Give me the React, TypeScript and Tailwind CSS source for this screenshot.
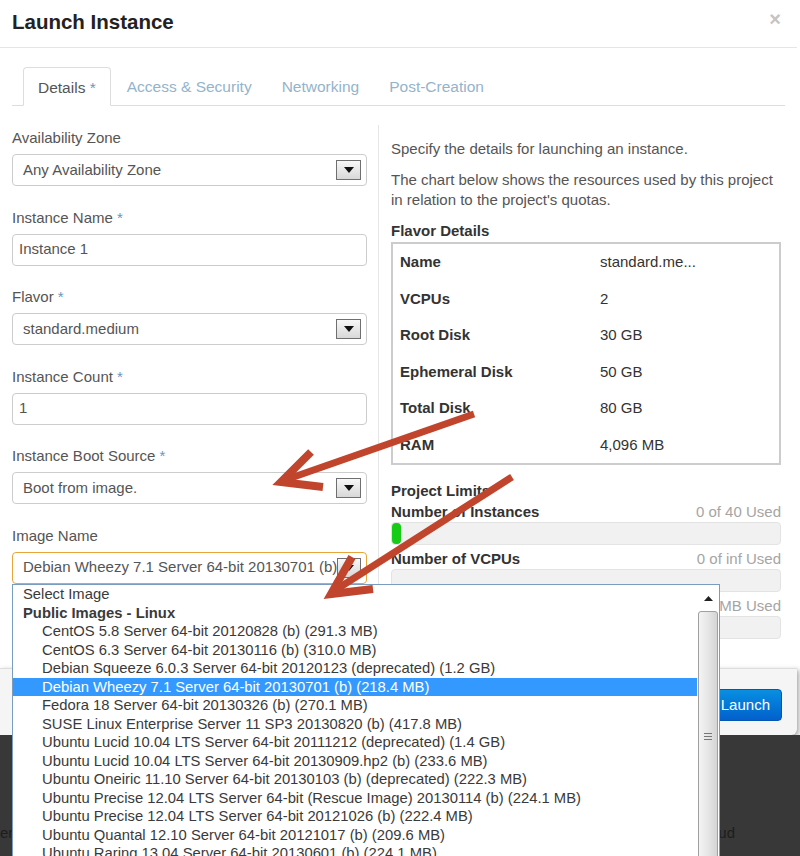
import React from "react";

const Caret = () => (
  <svg width="10" height="6" viewBox="0 0 10 6">
    <path d="M0 0h10L5 6z" fill="#111" />
  </svg>
);

const SelectBox = ({ value, focus }: { value: string; focus?: boolean }) => (
  <div
    className={`flex h-[32px] items-center justify-between rounded-[4px] border pl-[10px] pr-[5px] ${
      focus ? "border-[#e8a53a]" : "border-[#cccccc]"
    }`}
  >
    <span className="whitespace-nowrap">{value}</span>
    <div className="flex h-[20px] w-[25px] items-center justify-center border border-[#6f6f6f] bg-linear-to-b from-[#f8f8f8] to-[#d8d8d8]">
      <Caret />
    </div>
  </div>
);

const TextBox = ({ value }: { value: string }) => (
  <div className="flex h-[32px] items-center rounded-[4px] border border-[#cccccc] pl-[6px]">
    {value}
  </div>
);

const Field = ({
  label,
  req,
  children,
}: {
  label: string;
  req?: boolean;
  children: React.ReactNode;
}) => (
  <div className="mb-[21.5px]">
    <div className="mb-[6px] h-[20px] leading-[20px]">
      {label}
      {req && <span className="text-[#6b95bd]"> *</span>}
    </div>
    {children}
  </div>
);

const flavor = [
  ["Name", "standard.me..."],
  ["VCPUs", "2"],
  ["Root Disk", "30 GB"],
  ["Ephemeral Disk", "50 GB"],
  ["Total Disk", "80 GB"],
  ["RAM", "4,096 MB"],
];

const limits = [
  { label: "Number of Instances", used: "0 of 40 Used", fill: true },
  { label: "Number of VCPUs", used: "0 of inf Used", fill: false },
  { label: "Total RAM", used: "0 of 8,192 MB Used", fill: false },
];

type Opt = { text: string; kind: "plain" | "group" | "item"; on?: boolean };

const options: Opt[] = [
  { text: "Select Image", kind: "plain" },
  { text: "Public Images - Linux", kind: "group" },
  { text: "CentOS 5.8 Server 64-bit 20120828 (b) (291.3 MB)", kind: "item" },
  { text: "CentOS 6.3 Server 64-bit 20130116 (b) (310.0 MB)", kind: "item" },
  { text: "Debian Squeeze 6.0.3 Server 64-bit 20120123 (deprecated) (1.2 GB)", kind: "item" },
  { text: "Debian Wheezy 7.1 Server 64-bit 20130701 (b) (218.4 MB)", kind: "item", on: true },
  { text: "Fedora 18 Server 64-bit 20130326 (b) (270.1 MB)", kind: "item" },
  { text: "SUSE Linux Enterprise Server 11 SP3 20130820 (b) (417.8 MB)", kind: "item" },
  { text: "Ubuntu Lucid 10.04 LTS Server 64-bit 20111212 (deprecated) (1.4 GB)", kind: "item" },
  { text: "Ubuntu Lucid 10.04 LTS Server 64-bit 20130909.hp2 (b) (233.6 MB)", kind: "item" },
  { text: "Ubuntu Oneiric 11.10 Server 64-bit 20130103 (b) (deprecated) (222.3 MB)", kind: "item" },
  { text: "Ubuntu Precise 12.04 LTS Server 64-bit (Rescue Image) 20130114 (b) (224.1 MB)", kind: "item" },
  { text: "Ubuntu Precise 12.04 LTS Server 64-bit 20121026 (b) (222.4 MB)", kind: "item" },
  { text: "Ubuntu Quantal 12.10 Server 64-bit 20121017 (b) (209.6 MB)", kind: "item" },
  { text: "Ubuntu Raring 13.04 Server 64-bit 20130601 (b) (224.1 MB)", kind: "item" },
];

const ImageList = () => (
  <div className="absolute left-[12px] top-[584px] flex h-[290px] w-[708px] border border-[#7a9cbe] bg-white text-[#3a3a3a]">
    <div className="flex-1 text-[14.8px] leading-[18.5px]">
      {options.map((o) => (
        <div
          key={o.text}
          className={`h-[18.5px] whitespace-nowrap ${o.kind === "item" ? "pl-[29px]" : "pl-[10px]"} ${
            o.kind === "group" ? "font-bold" : ""
          } ${o.on ? "bg-[#3399ff] text-white" : ""}`}
        >
          {o.text}
        </div>
      ))}
    </div>
    <div className="flex w-[22px] flex-col bg-white">
      <div className="flex h-[26px] items-center justify-center">
        <svg width="9" height="5" viewBox="0 0 9 5">
          <path d="M0 5h9L4.5 0z" fill="#222" />
        </svg>
      </div>
      <div className="mx-[1px] flex flex-1 flex-col items-center rounded-t-[3px] border border-[#a0a0a0] bg-linear-to-r from-[#f4f4f4] via-[#e6e6e6] to-[#d4d4d4] pt-[121px]">
        <div className="h-px w-[8px] bg-[#777]" />
        <div className="mt-[2px] h-px w-[8px] bg-[#777]" />
        <div className="mt-[2px] h-px w-[8px] bg-[#777]" />
      </div>
    </div>
  </div>
);

const Arrows = () => (
  <svg className="pointer-events-none absolute left-0 top-0" width="800" height="856" viewBox="0 0 800 856">
    <g stroke="#c1452d" fill="none" strokeWidth="7">
      <line x1="474" y1="414" x2="285" y2="480" />
      <polyline points="311,452 281,482 323,487" strokeWidth="8" strokeLinejoin="miter" />
      <line x1="512" y1="477" x2="334" y2="591" />
      <polyline points="352,557 331,594 373,589" strokeWidth="8" strokeLinejoin="miter" />
    </g>
  </svg>
);

export default function App() {
  return (
    <div className="relative flex h-[856px] w-[800px] flex-col overflow-hidden bg-white font-['Liberation_Sans',Arial,sans-serif] text-[15px] text-[#555]">
      <div className="w-[797px] rounded-br-[6px] bg-white">
        <div className="flex h-[48px] items-start justify-between border-b border-[#e5e5e5] pl-[12px] pr-[16px]">
          <h1 className="pt-[10px] text-[20.5px] font-bold leading-[24px] text-[#222]">Launch Instance</h1>
          <span className="pt-[7px] text-[20px] font-bold leading-[24px] text-[#c4c4c4]">×</span>
        </div>

        <div className="mx-[12px] mt-[19px] flex border-b border-[#dddddd] pl-[11px] text-[15.5px]">
          <div className="-mb-px mr-[2px] flex h-[39px] items-center rounded-t-[4px] border border-[#dddddd] border-b-white bg-white px-[14px] pt-[2px] text-[#555]">
            Details<span className="text-[#6b95bd]">&nbsp;*</span>
          </div>
          {["Access & Security", "Networking", "Post-Creation"].map((t) => (
            <div key={t} className="mr-[2px] flex h-[38px] items-center border border-transparent px-[13px] pt-[2px] text-[#93b4cb] first:pl-[14px]">
              {t}
            </div>
          ))}
        </div>

        <div className="flex h-[562px]">
          <div className="w-[367px] shrink-0 pl-[12px] pt-[22px]">
            <Field label="Availability Zone">
              <SelectBox value="Any Availability Zone" />
            </Field>
            <Field label="Instance Name" req>
              <TextBox value="Instance 1" />
            </Field>
            <Field label="Flavor" req>
              <SelectBox value="standard.medium" />
            </Field>
            <Field label="Instance Count" req>
              <TextBox value="1" />
            </Field>
            <Field label="Instance Boot Source" req>
              <SelectBox value="Boot from image." />
            </Field>
            <Field label="Image Name">
              <SelectBox value="Debian Wheezy 7.1 Server 64-bit 20130701 (b)" focus />
            </Field>
          </div>

          <div className="mb-[20px] ml-[11px] mt-[19px] w-px bg-[#e6e6e6]" />

          <div className="flex-1 pl-[12px] pr-[16px] pt-[33px]">
            <p className="mb-[11px] leading-[20px]">Specify the details for launching an instance.</p>
            <p className="mb-[11px] leading-[20px]">
              The chart below shows the resources used by this project
              <br />
              in relation to the project's quotas.
            </p>
            <h3 className="mb-px font-bold leading-[20px] text-[#333]">Flavor Details</h3>
            <div className="border-2 border-[#cccccc] pl-[7px] text-[#333]">
              {flavor.map(([k, v]) => (
                <div key={k} className="flex h-[36.5px] items-center">
                  <span className="w-[200px] font-bold">{k}</span>
                  <span>{v}</span>
                </div>
              ))}
            </div>

            <h3 className="mt-[16px] font-bold leading-[20px] text-[#333]">Project Limits</h3>
            <div className="mt-px">
              {limits.map((l) => (
                <div key={l.label} className="mb-[4px]">
                  <div className="flex h-[20px] items-center justify-between">
                    <span className="font-bold text-[#333]">{l.label}</span>
                    <span className="text-[#a5a5a5]">{l.used}</span>
                  </div>
                  <div className="h-[23px] rounded-[4px] border border-[#e3e3e3] bg-[#f1f1f1]">
                    {l.fill && <div className="h-full w-[9px] rounded-[4px] bg-[#17cc17]" />}
                  </div>
                </div>
              ))}
            </div>
          </div>
        </div>

        <div className="flex h-[67px] justify-end gap-[6px] rounded-br-[6px] border-t border-[#dddddd] bg-[#f5f5f5] pr-[15px] pt-[20px] shadow-[2px_2px_5px_rgba(0,0,0,0.35)]">
          <div className="flex h-[32px] items-center rounded-[4px] border border-[#cccccc] bg-white px-[12px] text-[#333]">
            Cancel
          </div>
          <div className="flex h-[32px] items-center rounded-[4px] border border-[#0455b5] bg-linear-to-b from-[#0b8fe2] to-[#0460cc] px-[11px] text-white">
            Launch
          </div>
        </div>
      </div>

      <div className="flex flex-1 justify-between bg-[#383838] pr-[65px] pt-[88px] leading-[20px] text-[#1d1d1d]">
        <span>en</span>
        <span>Cloud</span>
      </div>

      <ImageList />
      <Arrows />
    </div>
  );
}
